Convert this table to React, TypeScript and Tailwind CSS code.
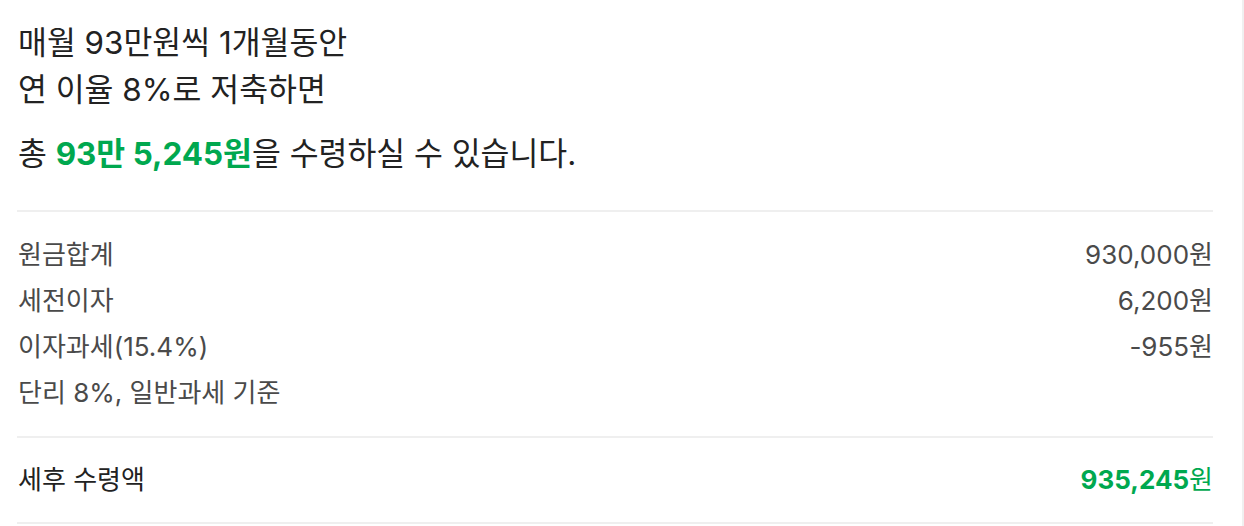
const rows = [
  { label: '원금합계', value: '930,000원' },
  { label: '세전이자', value: '6,200원' },
  { label: '이자과세(15.4%)', value: '-955원' },
  { label: '단리 8%, 일반과세 기준', value: '' },
];

export default function App() {
  return (
    <div
      className="w-[1244px] h-[526px] bg-white border-r-2 border-[#f0f0f0] pl-[17px] pr-[29px] pt-[20px] text-[#222]"
      style={{ fontFamily: 'Inter, "Noto Sans CJK KR", sans-serif' }}
    >
      <div className="pl-px">
        <p className="text-[31.4px] leading-[47px]">매월 93만원씩 1개월동안</p>
        <p className="text-[31.4px] leading-[47px]">연 이율 8%로 저축하면</p>
        <p className="text-[31.4px] leading-[47px] mt-[17px]">
          총 <span className="font-bold text-[#00a84f]">93만 5,245원</span>을 수령하실 수 있습니다.
        </p>
      </div>

      <div className="mt-[32px] border-t-2 border-[#efefef] py-[20px]">
        {rows.map((r) => (
          <div key={r.label} className="flex justify-between pl-px text-[26px] leading-[46px] text-[#4a4a4a]">
            <span>{r.label}</span>
            <span>{r.value}</span>
          </div>
        ))}
      </div>

      <div className="border-y-2 border-[#efefef] py-[19px] flex justify-between pl-px text-[26px] leading-[46px]">
        <span className="text-[#222]">세후 수령액</span>
        <span className="text-[#00a84f]">
          <span className="font-bold">935,245</span>원
        </span>
      </div>
    </div>
  );
}
